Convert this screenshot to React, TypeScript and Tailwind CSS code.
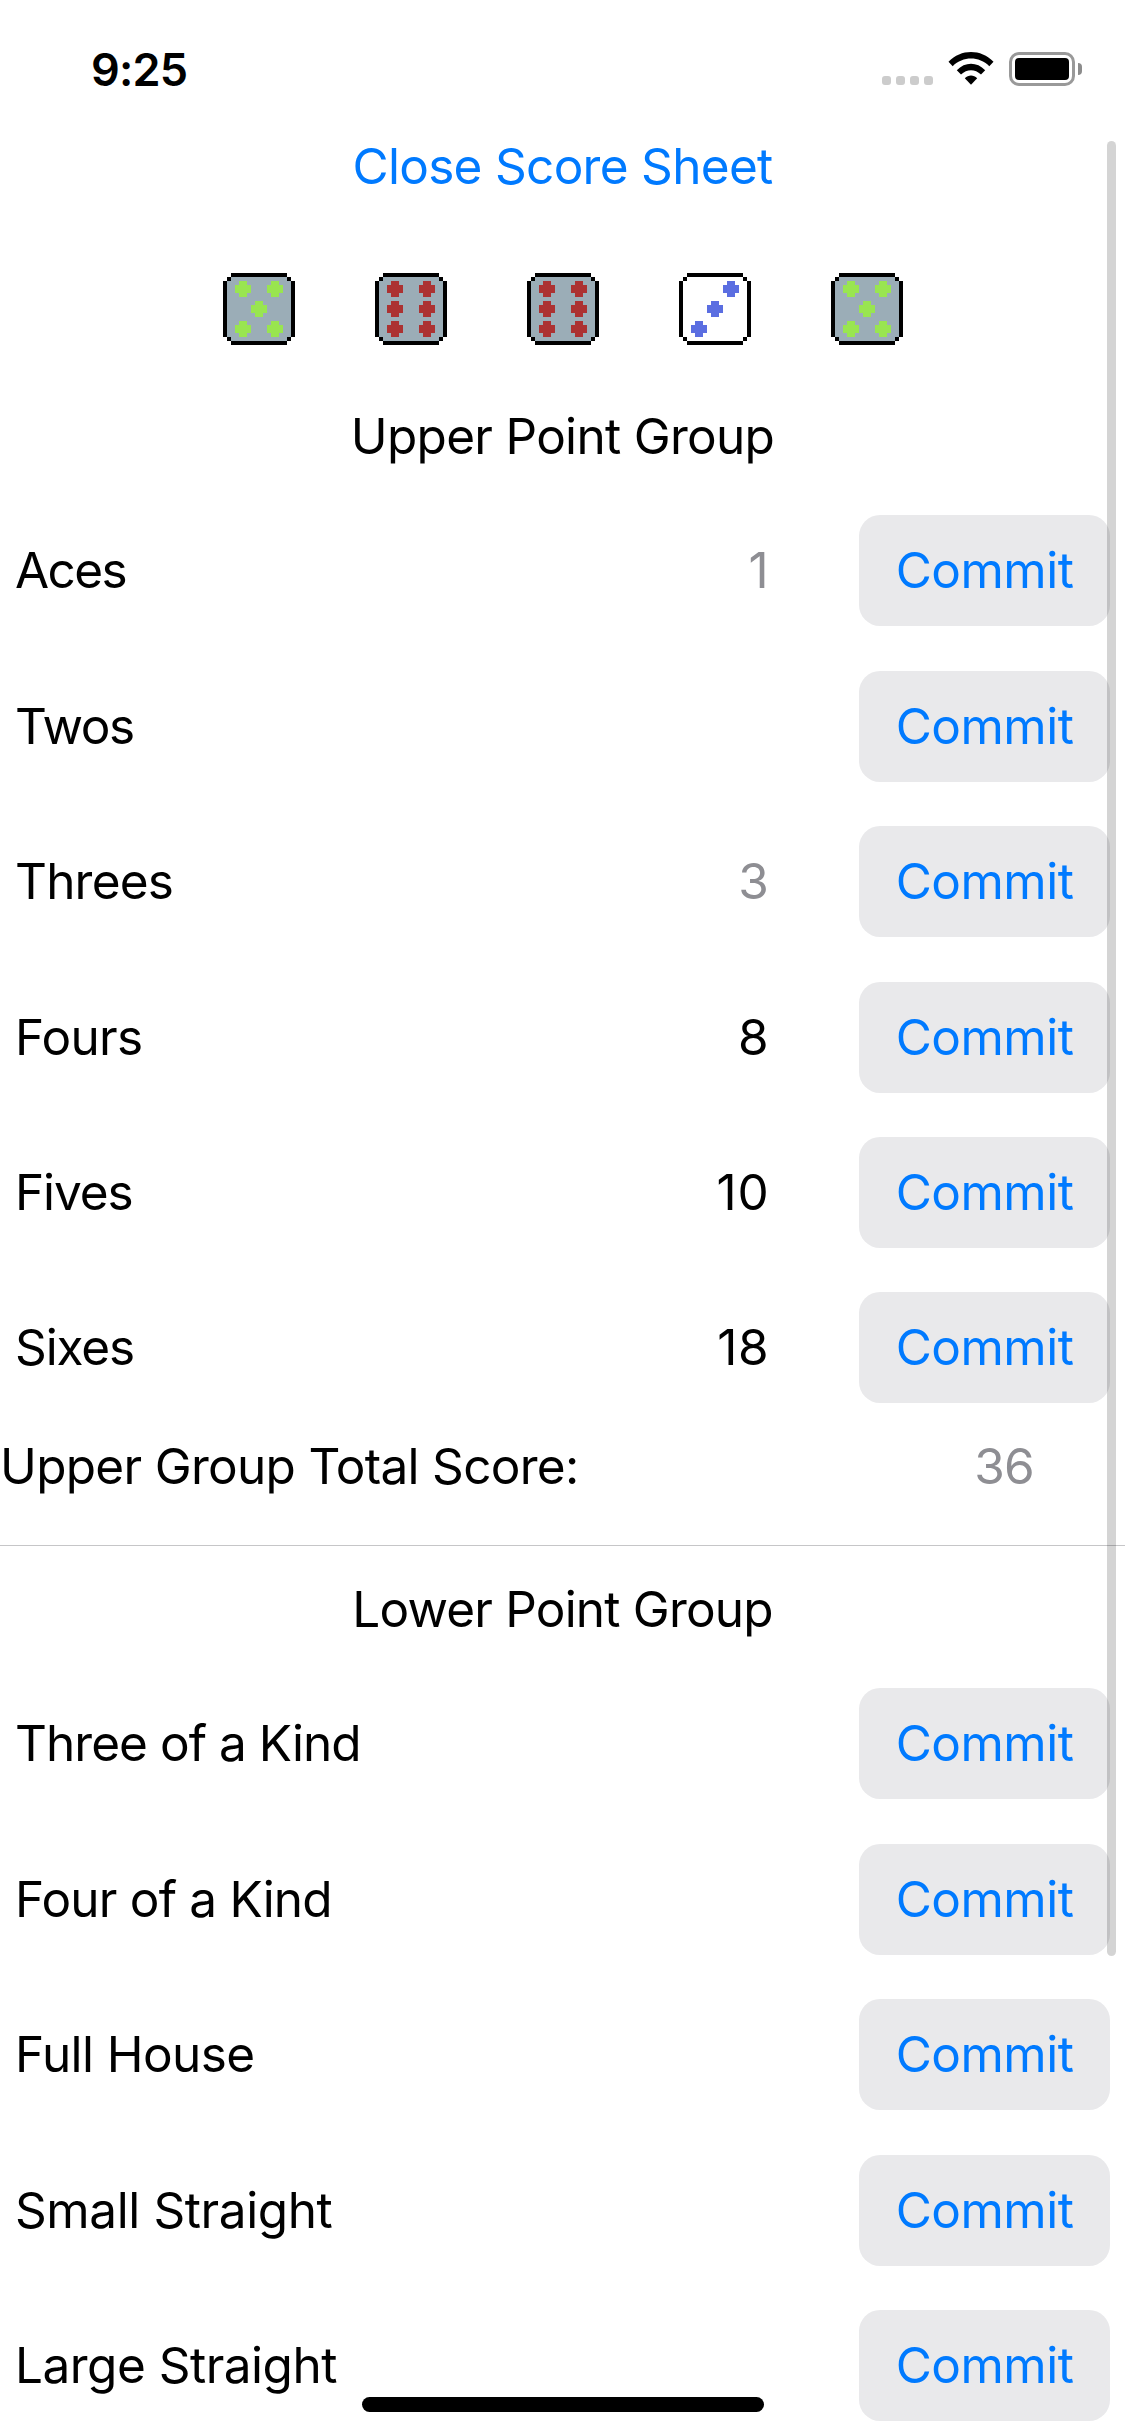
type Row = { name: string; tracking: string; score?: number; tentative?: boolean };

const UPPER: Row[] = [
  { name: "Aces", tracking: "tracking-[-1.6px]", score: 1, tentative: true },
  { name: "Twos", tracking: "tracking-[-1.4px]" },
  { name: "Threes", tracking: "tracking-[-0.8px]", score: 3, tentative: true },
  { name: "Fours", tracking: "tracking-[-0.7px]", score: 8 },
  { name: "Fives", tracking: "tracking-[-1.1px]", score: 10 },
  { name: "Sixes", tracking: "tracking-[-1.1px]", score: 18 },
];

const LOWER: Row[] = [
  { name: "Three of a Kind", tracking: "tracking-[-0.95px]" },
  { name: "Four of a Kind", tracking: "tracking-[-0.8px]" },
  { name: "Full House", tracking: "tracking-[-0.6px]" },
  { name: "Small Straight", tracking: "tracking-[-0.4px]" },
  { name: "Large Straight", tracking: "tracking-[-0.5px]" },
];

const PIPS: Record<number, [number, number][]> = {
  3: [[11, 2], [7, 7], [3, 12]],
  5: [[3, 2], [11, 2], [7, 7], [3, 12], [11, 12]],
  6: [[3, 2], [11, 2], [3, 7], [11, 7], [3, 12], [11, 12]],
};

const PIP_COLOR: Record<number, string> = { 3: "#5b6ee1", 5: "#99e550", 6: "#ac3232" };

function Die({ value, held }: { value: number; held: boolean }) {
  return (
    <svg className="size-[72px]" viewBox="0 0 18 18" shapeRendering="crispEdges">
      <path d="M2 0h14v1h1v1h1v14h-1v1h-1v1H2v-1H1v-1H0V2h1V1h1z" fill="#000" />
      <path d="M2 1h14v1h1v14h-1v1H2v-1H1V2h1z" fill={held ? "#9badb7" : "#fff"} />
      {PIPS[value].map(([x, y]) => (
        <path
          key={`${x}-${y}`}
          d={`M${x + 1} ${y}h2v1h1v2h-1v1h-2v-1h-1v-2h1z`}
          fill={PIP_COLOR[value]}
        />
      ))}
    </svg>
  );
}

function ScoreRow({ name, tracking, score, tentative }: Row) {
  return (
    <div className="flex h-[155.4px] items-center px-[15px]">
      <span className={`flex-1 ${tracking}`}>{name}</span>
      <span className={`tracking-[0.8px] ${tentative ? "text-[#8e8e93]" : "text-black"}`}>{score}</span>
      <button className="ml-[89.5px] h-[111px] w-[251px] rounded-[21px] bg-[#e9e9eb] tracking-[-0.5px] text-[#007aff]">
        Commit
      </button>
    </div>
  );
}

function StatusBar() {
  return (
    <header className="flex h-[132px] shrink-0 items-start pl-[91px] pr-[43px] tracking-normal">
      <span className="mt-[43px] flex-1 text-[45px] leading-[54px] font-semibold tracking-[-0.8px]">9:25</span>
      <div className="mt-[76px] flex gap-[5px]">
        {[0, 1, 2, 3].map((i) => (
          <span key={i} className="size-[9px] rounded-[3px] bg-[#cccccc]" />
        ))}
      </div>
      <svg className="mt-[52px] ml-[15px] h-[33px] w-[46px]" viewBox="0 0 46 33">
        <path d="M0.5 9.8C13-3.2 33-3.2 45.5 9.8L41.3 14.2C31 4 15 4 4.7 14.2Z" />
        <path d="M8.8 18.2C17 9.6 29 9.6 37.2 18.2L33 22.5C27 16.8 19 16.8 13 22.5Z" />
        <path d="M16.8 26.3C20.5 22.5 25.5 22.5 29.2 26.3L23 32.7Z" />
      </svg>
      <div className="mt-[52px] ml-[15px] flex items-center gap-[3px]">
        <div className="h-[34px] w-[66px] rounded-[10px] border-3 border-[#999999] p-[3px]">
          <div className="h-full w-[54px] rounded-[4px] bg-black" />
        </div>
        <div className="h-[12px] w-[4px] rounded-r-full bg-[#8c8c8c]" />
      </div>
    </header>
  );
}

export default function App() {
  return (
    <div className="relative flex h-[2436px] w-[1125px] flex-col overflow-hidden bg-white font-['Inter',sans-serif] text-[49.5px] leading-[61px] tracking-[-0.7px] text-black">
      <StatusBar />
      <button className="mt-[4px] h-[61px] shrink-0 text-[#007aff]">Close Score Sheet</button>
      <div className="mt-[76px] flex shrink-0 justify-center gap-20">
        <Die value={5} held />
        <Die value={6} held />
        <Die value={6} held />
        <Die value={3} held={false} />
        <Die value={5} held />
      </div>
      <h2 className="mt-[61px] shrink-0 text-center">Upper Point Group</h2>
      <section className="mt-[26.2px] shrink-0">
        {UPPER.map((r) => (
          <ScoreRow key={r.name} {...r} />
        ))}
      </section>
      <div className="mt-[10.4px] flex shrink-0 pr-[91px]">
        <span className="flex-1">Upper Group Total Score:</span>
        <span className="text-[#8e8e93]">36</span>
      </div>
      <hr className="mt-[48.1px] shrink-0 border-[#c6c6c8]" />
      <h2 className="mt-[33px] shrink-0 text-center tracking-[-0.8px]">Lower Point Group</h2>
      <section className="mt-[26.13px] shrink-0">
        {LOWER.map((r) => (
          <ScoreRow key={r.name} {...r} />
        ))}
      </section>
      <div className="absolute top-[141px] right-[9px] h-[1815px] w-[9px] rounded-full bg-black/17" />
      <div className="absolute bottom-[24px] left-[362px] h-[15px] w-[402px] rounded-full bg-black" />
    </div>
  );
}
